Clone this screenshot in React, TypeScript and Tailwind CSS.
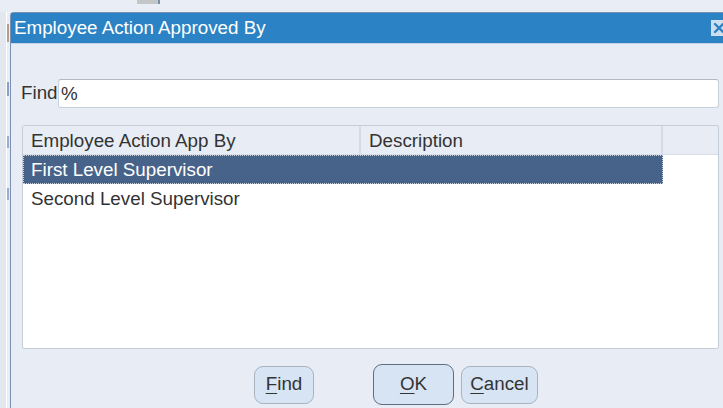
import { useState } from "react";

const rows = [
  { code: "First Level Supervisor", description: "" },
  { code: "Second Level Supervisor", description: "" },
];

function Mnemonic({ label }: { label: string }) {
  return (
    <>
      <span className="underline underline-offset-[3px] decoration-1">{label[0]}</span>
      {label.slice(1)}
    </>
  );
}

export default function App() {
  const [selected, setSelected] = useState(0);
  const [query, setQuery] = useState("%");

  return (
    <div
      className="w-[723px] h-[408px] overflow-hidden bg-[#e9edf5] flex flex-col text-[18.8px] text-[#333]"
      style={{ fontFamily: '"Liberation Sans", Arial, sans-serif' }}
    >
      {/* strip of the form behind the dialog */}
      <div className="h-[12px] shrink-0 flex">
        <div className="ml-[137px] w-[23px] h-[4px] bg-[#c3c5c9] border-r-2 border-[#7f8ea8]" />
      </div>

      <div className="flex flex-1 min-h-0">
        <div className="w-[10px] shrink-0 flex">
          <div className="w-[6px] bg-[#e3e7ee]" />
          <div className="w-[1px] bg-white" />
          <div className="w-[3px] flex flex-col gap-[40px] pt-[12px]">
            <div className="h-[18px] w-[2px] bg-[#8a6a4a] opacity-60" />
            <div className="h-[14px] w-[2px] bg-[#4b6ea8] opacity-60" />
            <div className="h-[12px] w-[2px] bg-[#4b6ea8] opacity-50" />
            <div className="h-[12px] w-[2px] bg-[#4b6ea8] opacity-50" />
          </div>
        </div>

        {/* dialog */}
        <div className="flex-1 flex flex-col border-l border-t border-[#7b8fb2] rounded-tl-[4px] bg-[#e8edf5] min-w-0">
          <div className="h-[31px] shrink-0 bg-[#2b83c5] flex items-center pl-[3px] border-b border-[#c5d3e4]">
            <span className="text-white leading-none">Employee Action Approved By</span>
            <div className="ml-auto mr-[-4px] w-[16px] h-[16px] bg-[#cfdff0] flex items-center justify-center">
              <svg width="12" height="12" viewBox="0 0 12 12">
                <path d="M2 2 L10 10 M10 2 L2 10" stroke="#2b83c5" strokeWidth="2.4" strokeLinecap="round" />
              </svg>
            </div>
          </div>

          <div className="flex flex-col pl-[10px] pr-[4px]">
            <div className="mt-[35px] flex items-center h-[29px]">
              <label className="w-[37px] shrink-0">Find</label>
              <input
                value={query}
                onChange={(e) => setQuery(e.target.value)}
                className="flex-1 h-[29px] bg-white border border-[#c9d1dc] border-t-[#b4b9c1] rounded-[3px] px-[2px] outline-none text-[#333]"
              />
            </div>

            <div className="mt-[17px] ml-[1px] h-[224px] bg-white border border-[#c4cedb] rounded-[2px] flex flex-col">
              <div className="h-[29px] shrink-0 flex bg-[#e8edf5] border-b border-[#d5dde8]">
                <div className="w-[338px] shrink-0 pl-[8px] pt-[2px] flex items-center border-r-2 border-[#d3dbe6]">
                  Employee Action App By
                </div>
                <div className="w-[302px] shrink-0 pl-[8px] pt-[2px] flex items-center border-r-2 border-[#d3dbe6]">
                  Description
                </div>
                <div className="flex-1" />
              </div>

              {rows.map((row, i) => (
                <div
                  key={row.code}
                  onClick={() => setSelected(i)}
                  className={`w-[640px] h-[29px] flex items-center pt-[2px] ${
                    selected === i
                      ? "bg-[#486389] text-white border border-dotted border-[#c8d2df]"
                      : "border border-transparent"
                  }`}
                >
                  <div className="w-[337px] pl-[7px] shrink-0">{row.code}</div>
                  <div className="flex-1 pl-[8px]">{row.description}</div>
                </div>
              ))}
            </div>

            <div className="mt-[15px] flex items-center h-[41px]">
              <button className="ml-[233px] w-[60px] h-[38px] bg-[#d6e4f3] border border-[#a9b3c0] rounded-[9px] text-[#333]">
                <Mnemonic label="Find" />
              </button>
              <button className="ml-[59px] w-[81px] h-[41px] bg-[#d6e4f3] border border-[#5d6d82] rounded-[9px] text-[#333]">
                <Mnemonic label="OK" />
              </button>
              <button className="ml-[7px] w-[77px] h-[38px] bg-[#d6e4f3] border border-[#a9b3c0] rounded-[9px] text-[#333]">
                <Mnemonic label="Cancel" />
              </button>
            </div>
          </div>
        </div>
      </div>
    </div>
  );
}
